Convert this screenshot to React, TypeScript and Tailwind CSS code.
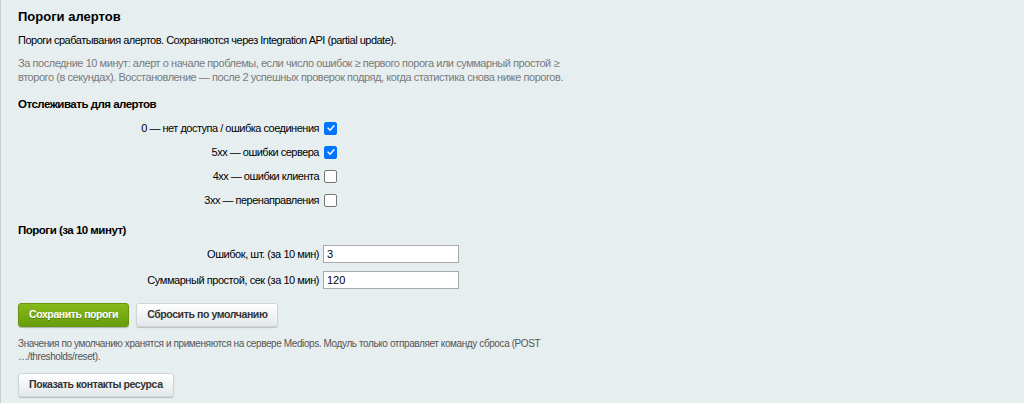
import React, { useState } from 'react';

const checks = [
  { id: 'c0', label: '0 — нет доступа / ошибка соединения', on: true },
  { id: 'c5', label: '5xx — ошибки сервера', on: true },
  { id: 'c4', label: '4xx — ошибки клиента', on: false },
  { id: 'c3', label: '3xx — перенаправления', on: false },
];

function Box({ checked, onChange }: { checked: boolean; onChange: () => void }) {
  return (
    <button
      type="button"
      onClick={onChange}
      className={`w-[13px] h-[13px] rounded-[2px] flex items-center justify-center ${
        checked ? 'bg-[#0075ff] border border-[#0075ff]' : 'bg-white border border-[#767676]'
      }`}
    >
      {checked && (
        <svg viewBox="0 0 12 12" className="w-[10px] h-[10px]">
          <path d="M2.5 6.2 L5 8.6 L9.6 3.4" fill="none" stroke="white" strokeWidth="1.8" strokeLinecap="round" strokeLinejoin="round" />
        </svg>
      )}
    </button>
  );
}

const btnGray =
  'h-[24px] px-[10px] rounded-[3px] bg-gradient-to-b from-[#ffffff] to-[#e3e8ea] border border-[#cfd6d9] shadow-[0_1px_1px_rgba(0,0,0,0.2)] text-[#333] text-[10.5px] font-bold tracking-[-0.4px]';

export default function App() {
  const [state, setState] = useState<Record<string, boolean>>(
    Object.fromEntries(checks.map((c) => [c.id, c.on]))
  );
  const [errors, setErrors] = useState('3');
  const [downtime, setDowntime] = useState('120');

  return (
    <div className="w-[1024px] h-[403px] overflow-hidden bg-[#e7eef0] border-l border-[#c3d0d4] text-[#000] font-['Liberation_Sans',Arial,sans-serif] pl-[17px] pt-[9px]">
      {/* Title */}
      <h2 className="text-[13px] font-bold leading-[16px]">Пороги алертов</h2>
      <p className="mt-[8px] text-[11px] tracking-[-0.5px] leading-[14px]">
        Пороги срабатывания алертов. Сохраняются через Integration API (partial update).
      </p>
      <p className="mt-[9px] w-[550px] text-[11px] tracking-[-0.45px] leading-[14px] text-[#7a7a7a]">
        За последние 10 минут: алерт о начале проблемы, если число ошибок ≥ первого порога или суммарный простой ≥
        второго (в секундах). Восстановление — после 2 успешных проверок подряд, когда статистика снова ниже порогов.
      </p>

      {/* Tracked codes */}
      <h3 className="mt-[13px] text-[11.5px] font-bold tracking-[-0.5px] leading-[14px]">Отслеживать для алертов</h3>
      <div className="mt-[5px] flex flex-col">
        {checks.map((c) => (
          <div key={c.id} className="h-[24px] flex items-center">
            <span className="w-[301px] text-right text-[11px] tracking-[-0.5px] pr-[5px] box-content">{c.label}</span>
            <Box checked={state[c.id]} onChange={() => setState({ ...state, [c.id]: !state[c.id] })} />
          </div>
        ))}
      </div>

      {/* Thresholds */}
      <h3 className="mt-[11px] text-[11.5px] font-bold tracking-[-0.5px] leading-[14px]">Пороги (за 10 минут)</h3>
      <div className="mt-[8px] flex flex-col gap-[8px]">
        <div className="flex items-center">
          <label className="w-[301px] text-right text-[11px] tracking-[-0.45px] pr-[4px] box-content">Ошибок, шт. (за 10 мин)</label>
          <input
            value={errors}
            onChange={(e) => setErrors(e.target.value)}
            className="w-[136px] h-[18px] bg-white border border-[#a9a9a9] px-[3px] text-[11px] outline-none"
          />
        </div>
        <div className="flex items-center">
          <label className="w-[301px] text-right text-[11px] tracking-[-0.45px] pr-[4px] box-content">Суммарный простой, сек (за 10 мин)</label>
          <input
            value={downtime}
            onChange={(e) => setDowntime(e.target.value)}
            className="w-[136px] h-[18px] bg-white border border-[#a9a9a9] px-[3px] text-[11px] outline-none"
          />
        </div>
      </div>

      {/* Actions */}
      <div className="mt-[14px] flex gap-[7px]">
        <button className="h-[24px] px-[10px] rounded-[3px] bg-gradient-to-b from-[#86bb1a] to-[#679c0b] border border-[#6a9410] shadow-[0_1px_1px_rgba(0,0,0,0.25)] text-white text-[10.5px] font-bold tracking-[-0.4px] [text-shadow:0_1px_0_rgba(0,0,0,0.25)]">
          Сохранить пороги
        </button>
        <button className={btnGray}>Сбросить по умолчанию</button>
      </div>
      <p className="mt-[10px] w-[540px] text-[10px] tracking-[-0.4px] leading-[13px] text-[#555]">
        Значения по умолчанию хранятся и применяются на сервере Mediops. Модуль только отправляет команду сброса (POST
        …/thresholds/reset).
      </p>
      <button className={`mt-[10px] ${btnGray}`}>Показать контакты ресурса</button>
    </div>
  );
}
